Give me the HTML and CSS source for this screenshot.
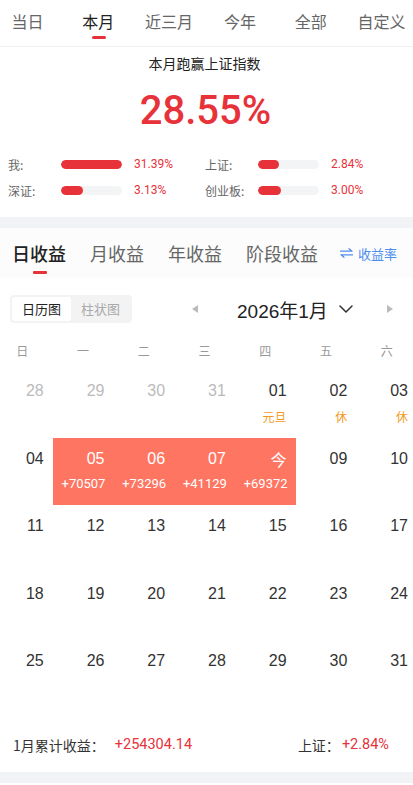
FILE: index.html
```html
<!DOCTYPE html>
<html lang="zh">
<head>
<meta charset="utf-8">
<link rel="stylesheet" href="styles.css">
</head>
<body>
<div class="page">
  <nav class="range-tabs">
    <div class="rt">当日</div>
    <div class="rt active">本月</div>
    <div class="rt">近三月</div>
    <div class="rt">今年</div>
    <div class="rt">全部</div>
    <div class="rt">自定义</div>
  </nav>

  <section class="summary">
    <div class="sum-title">本月跑赢上证指数</div>
    <div class="sum-value">28.55%</div>
    <div class="bars">
      <div class="bar-item"><span class="bl">我:</span><span class="track"><span class="fill" style="width:100%"></span></span><span class="bv">31.39%</span></div>
      <div class="bar-item"><span class="bl">上证:</span><span class="track"><span class="fill" style="width:35%"></span></span><span class="bv">2.84%</span></div>
      <div class="bar-item"><span class="bl">深证:</span><span class="track"><span class="fill" style="width:36%"></span></span><span class="bv">3.13%</span></div>
      <div class="bar-item"><span class="bl">创业板:</span><span class="track"><span class="fill" style="width:37%"></span></span><span class="bv">3.00%</span></div>
    </div>
  </section>

  <div class="band"></div>

  <section class="profit">
    <div class="ptabs">
      <div class="pt active">日收益</div>
      <div class="pt">月收益</div>
      <div class="pt">年收益</div>
      <div class="pt">阶段收益</div>
      <div class="rate">
        <svg class="rate-ic" width="13" height="10" viewBox="0 0 13 10"><path d="M0.5 3.2H12L9 0.8M12.5 6.8H1L4 9.2" fill="none" stroke="#4d8ef0" stroke-width="1.3" stroke-linecap="round" stroke-linejoin="round"/></svg>
        <span>收益率</span>
      </div>
    </div>

    <div class="toolbar">
      <div class="seg">
        <div class="seg-item on">日历图</div>
        <div class="seg-item">柱状图</div>
      </div>
      <span class="tri tri-left"></span>
      <span class="month">2026年1月</span>
      <svg class="chev" width="14" height="8" viewBox="0 0 14 8"><path d="M1 1L7 7L13 1" fill="none" stroke="#333" stroke-width="1.5" stroke-linecap="round" stroke-linejoin="round"/></svg>
      <span class="tri tri-right"></span>
    </div>

    <div class="weekdays">
      <div>日</div><div>一</div><div>二</div><div>三</div><div>四</div><div>五</div><div>六</div>
    </div>

    <div class="cal">
      <div class="day other"><span class="dn">28</span></div>
      <div class="day other"><span class="dn">29</span></div>
      <div class="day other"><span class="dn">30</span></div>
      <div class="day other"><span class="dn">31</span></div>
      <div class="day"><span class="dn">01</span><span class="hol">元旦</span></div>
      <div class="day"><span class="dn">02</span><span class="hol">休</span></div>
      <div class="day"><span class="dn">03</span><span class="hol">休</span></div>

      <div class="day"><span class="dn">04</span></div>
      <div class="day gain"><span class="dn">05</span><span class="amt">+70507</span></div>
      <div class="day gain"><span class="dn">06</span><span class="amt">+73296</span></div>
      <div class="day gain"><span class="dn">07</span><span class="amt">+41129</span></div>
      <div class="day gain"><span class="dn today">今</span><span class="amt">+69372</span></div>
      <div class="day"><span class="dn">09</span></div>
      <div class="day"><span class="dn">10</span></div>

      <div class="day"><span class="dn">11</span></div>
      <div class="day"><span class="dn">12</span></div>
      <div class="day"><span class="dn">13</span></div>
      <div class="day"><span class="dn">14</span></div>
      <div class="day"><span class="dn">15</span></div>
      <div class="day"><span class="dn">16</span></div>
      <div class="day"><span class="dn">17</span></div>

      <div class="day"><span class="dn">18</span></div>
      <div class="day"><span class="dn">19</span></div>
      <div class="day"><span class="dn">20</span></div>
      <div class="day"><span class="dn">21</span></div>
      <div class="day"><span class="dn">22</span></div>
      <div class="day"><span class="dn">23</span></div>
      <div class="day"><span class="dn">24</span></div>

      <div class="day"><span class="dn">25</span></div>
      <div class="day"><span class="dn">26</span></div>
      <div class="day"><span class="dn">27</span></div>
      <div class="day"><span class="dn">28</span></div>
      <div class="day"><span class="dn">29</span></div>
      <div class="day"><span class="dn">30</span></div>
      <div class="day"><span class="dn">31</span></div>
    </div>

    <div class="total">
      <span class="t-label">1月累计收益：</span>
      <span class="t-val wide">+254304.14</span>
      <span class="t-spacer"></span>
      <span class="t-label">上证：</span>
      <span class="t-val">+2.84%</span>
    </div>
  </section>

  <div class="band"></div>
</div>
</body>
</html>
```

FILE: styles.css
```css
* { box-sizing: border-box; }
html, body {
  margin: 0;
  padding: 0;
  background: #fff;
  overflow: hidden;
}
body {
  font-family: "Roboto", "Noto Sans CJK SC", sans-serif;
  color: #222;
}
.page {
  width: 425px;
  margin-left: -8px;
}

/* top range tabs */
.range-tabs {
  display: flex;
  height: 47px;
  border-bottom: 1px solid #f0f0f0;
}
.rt {
  flex: 1;
  text-align: center;
  font-family: "Noto Sans CJK SC", sans-serif;
  font-size: 16px;
  line-height: 22px;
  padding-top: 10px;
  color: #666;
  position: relative;
}
.rt.active { color: #222; }
.rt.active::after {
  content: "";
  position: absolute;
  left: 50%;
  top: 36px;
  width: 14px;
  height: 3px;
  margin-left: -6px;
  border-radius: 2px;
  background: #e8323a;
}

/* summary */
.summary {
  padding: 6px 16px 14px;
}
.sum-title {
  text-align: center;
  font-family: "Noto Sans CJK SC", sans-serif;
  font-size: 14px;
  line-height: 20px;
  color: #222;
}
.sum-value {
  text-align: center;
  font-family: "Roboto", sans-serif;
  font-weight: 500;
  font-size: 40px;
  line-height: 48px;
  margin-top: 14px;
  color: #e8323a;
  padding-left: 2px;
}
.bars {
  display: grid;
  grid-template-columns: 197px 197px;
  margin-top: 16px;
}
.bar-item {
  display: flex;
  align-items: center;
  height: 26px;
}
.bl {
  width: 53px;
  font-family: "Noto Sans CJK SC", sans-serif;
  font-size: 12px;
  color: #666;
}
.track {
  width: 61px;
  height: 9px;
  border-radius: 5px;
  background: #f3f4f5;
  overflow: hidden;
  display: block;
}
.fill {
  display: block;
  height: 100%;
  border-radius: 5px;
  background: #e8323a;
}
.bv {
  margin-left: 12px;
  font-size: 12px;
  color: #e8323a;
}

.band {
  height: 11px;
  background: #f2f3f7;
}

/* profit section */
.ptabs {
  display: flex;
  align-items: center;
  height: 50px;
  padding-left: 20px;
  background: #fcfcfc;
  gap: 24px;
}
.pt {
  position: relative;
  font-family: "Noto Sans CJK SC", sans-serif;
  font-size: 18px;
  line-height: 26px;
  color: #666;
}
.pt.active { color: #222; font-weight: 500; }
.pt.active::after {
  content: "";
  position: absolute;
  left: 50%;
  top: 31px;
  width: 14px;
  height: 3px;
  margin-left: -6px;
  border-radius: 1px;
  background: #e8323a;
}
.rate {
  display: flex;
  align-items: center;
  gap: 5px;
  margin-left: -2px;
  color: #4d8ef0;
  font-family: "Noto Sans CJK SC", sans-serif;
  font-size: 13px;
}

.toolbar {
  display: flex;
  align-items: center;
  height: 55px;
  padding-left: 18px;
  padding-top: 7px;
}
.seg {
  display: flex;
  width: 122px;
  height: 28px;
  padding: 2px;
  border-radius: 4px;
  background: #f3f3f3;
}
.seg-item {
  flex: 1;
  text-align: center;
  font-family: "Noto Sans CJK SC", sans-serif;
  font-size: 13px;
  line-height: 24px;
  color: #aaa;
  border-radius: 3px;
}
.seg-item.on {
  background: #fff;
  color: #222;
}
.tri {
  width: 0;
  height: 0;
  border-top: 4.5px solid transparent;
  border-bottom: 4.5px solid transparent;
}
.tri-left {
  border-right: 6px solid #bbb;
  margin-left: 60px;
}
.tri-right {
  border-left: 6px solid #bbb;
  margin-left: 34px;
}
.month {
  margin-left: 39px;
  font-family: "Liberation Sans", "Noto Sans CJK SC", sans-serif;
  font-size: 19px;
  color: #222;
}
.chev { margin-left: 11px; }

.weekdays {
  display: grid;
  grid-template-columns: repeat(7, 1fr);
  height: 37px;
  align-items: center;
  padding-bottom: 2px;
}
.weekdays div {
  text-align: center;
  font-family: "Noto Sans CJK SC", sans-serif;
  font-size: 12px;
  color: #999;
}

.cal {
  display: grid;
  grid-template-columns: repeat(7, 1fr);
  grid-auto-rows: 67.5px;
}
.day {
  display: flex;
  flex-direction: column;
  align-items: flex-end;
  padding: 10px 9px 0 0;
}
.dn {
  font-family: "Liberation Sans", "Noto Sans CJK SC", sans-serif;
  font-size: 16px;
  line-height: 22px;
  color: #333;
}
.dn.today {
  font-family: "Noto Sans CJK SC", sans-serif;
  font-size: 16px;
}
.other .dn { color: #bbb; }
.hol {
  margin-top: 5px;
  font-family: "Noto Sans CJK SC", sans-serif;
  font-size: 12px;
  line-height: 20px;
  color: #f39a1e;
}
.gain {
  background: #fe7562;
}
.gain .dn { color: #fff; }
.amt {
  margin-top: 4px;
  font-family: "Roboto", sans-serif;
  font-size: 13px;
  line-height: 20px;
  color: #fff;
  margin-right: -1px;
}

.total {
  display: flex;
  align-items: center;
  height: 64.5px;
  padding: 10px 28px 0 21px;
}
.t-label {
  font-family: "Noto Sans CJK SC", sans-serif;
  font-size: 14px;
  color: #333;
}
.t-val {
  margin-left: 2px;
  font-family: "Roboto", sans-serif;
  font-size: 14.5px;
  color: #e8323a;
}
.t-val.wide { margin-left: 10px; }
.t-spacer { flex: 1; }
```
